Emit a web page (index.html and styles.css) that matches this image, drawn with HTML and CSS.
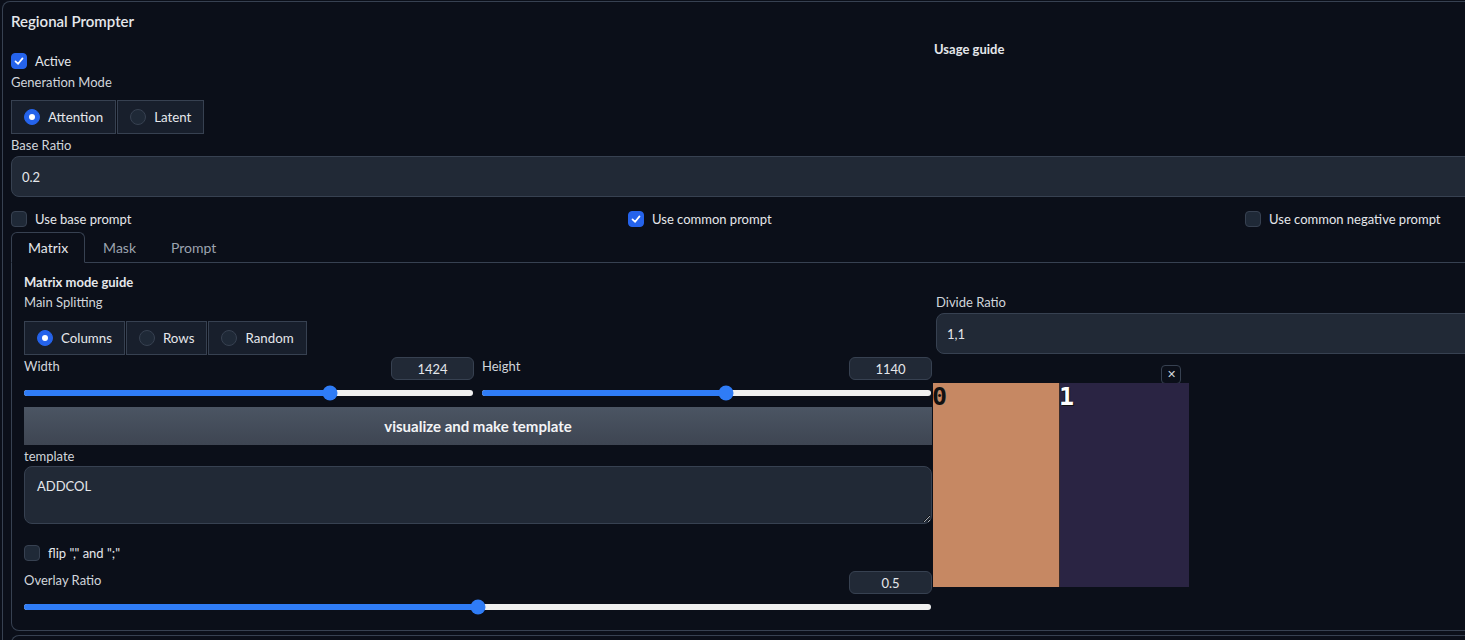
FILE: index.html
```html
<!DOCTYPE html>
<html lang="en">

<head>
  <meta charset="UTF-8">
  <meta name="viewport" content="width=device-width, initial-scale=1.0">
  <title>Regional Prompter</title>
  <link rel="stylesheet" href="styles.css">
</head>

<body>
  <div class="panel">
    <div class="panel-title">Regional Prompter</div>

    <div class="top-row">
      <div class="top-left">
        <label class="check"><span class="box on"><svg viewBox="0 0 16 16"><polyline points="4 8.5 7 11.2 12 5"/></svg></span>Active</label>
      </div>
      <div class="guide">Usage guide</div>
    </div>

    <div class="field-label">Generation Mode</div>
    <div class="radio-group">
      <label class="radio-item"><span class="dot on"></span>Attention</label>
      <label class="radio-item"><span class="dot"></span>Latent</label>
    </div>

    <div class="field-label">Base Ratio</div>
    <input class="text-box" type="text" value="0.2">

    <div class="check-row">
      <label class="check"><span class="box"></span>Use base prompt</label>
      <label class="check"><span class="box on"><svg viewBox="0 0 16 16"><polyline points="4 8.5 7 11.2 12 5"/></svg></span>Use common prompt</label>
      <label class="check"><span class="box"></span>Use common negative prompt</label>
    </div>

    <div class="tabs">
      <div class="tab-nav">
        <button class="tab active">Matrix</button>
        <button class="tab">Mask</button>
        <button class="tab">Prompt</button>
      </div>

      <div class="tab-body">
        <div class="guide">Matrix mode guide</div>

        <div class="matrix-row">
          <div class="matrix-left">
            <div class="field-label">Main Splitting</div>
            <div class="radio-group wide">
              <label class="radio-item"><span class="dot on"></span>Columns</label>
              <label class="radio-item"><span class="dot"></span>Rows</label>
              <label class="radio-item"><span class="dot"></span>Random</label>
            </div>

            <div class="slider-pair">
              <div class="slider">
                <div class="slider-head">
                  <span class="slider-label">Width</span>
                  <input class="num-box" type="text" value="1424">
                </div>
                <div class="track"><div class="fill" style="width: 68.2%"></div><span class="thumb" style="left: 68.2%"></span></div>
              </div>
              <div class="slider">
                <div class="slider-head">
                  <span class="slider-label">Height</span>
                  <input class="num-box" type="text" value="1140">
                </div>
                <div class="track"><div class="fill" style="width: 54.3%"></div><span class="thumb" style="left: 54.3%"></span></div>
              </div>
            </div>

            <button class="make-btn">visualize and make template</button>

            <div class="field-label">template</div>
            <textarea class="template-box" readonly>ADDCOL</textarea>

            <label class="check flip"><span class="box"></span>flip "," and ";"</label>

            <div class="slider overlay">
              <div class="slider-head">
                <span class="slider-label">Overlay Ratio</span>
                <input class="num-box" type="text" value="0.5">
              </div>
              <div class="track"><div class="fill" style="width: 50%"></div><span class="thumb" style="left: 50%"></span></div>
            </div>
          </div>

          <div class="matrix-right">
            <div class="field-label">Divide Ratio</div>
            <input class="text-box" type="text" value="1,1">

            <div class="preview">
              <button class="close-btn">&#x2715;</button>
              <div class="preview-img">
                <div class="region region-0"><span class="region-num dark">0</span></div>
                <div class="region region-1"><span class="region-num light">1</span></div>
              </div>
            </div>
          </div>
        </div>
      </div>
    </div>

    <div class="next-block"></div>
  </div>
</body>

</html>
```

FILE: styles.css
```css
body {
  margin: 0;
  background-color: #0b0f19;
  color: #e5e7eb;
  font-family: Lato, "Liberation Sans", sans-serif;
  font-size: 13px;
  overflow: hidden;
}

.panel {
  width: 1851px;
  margin: 1px 0 0 2px;
  padding: 0 8px;
  border: 1px solid #374151;
  border-bottom: none;
  border-radius: 8px 8px 0 0;
  min-height: 700px;
}

.panel-title {
  height: 38px;
  line-height: 38px;
  font-size: 15px;
  font-weight: 600;
}

.top-row {
  display: grid;
  grid-template-columns: 923px 1fr;
}

.top-left {
  padding-top: 11px;
}

.guide {
  line-height: 18px;
  font-weight: 700;
  font-size: 13px;
}

.tab-body .guide {
  line-height: 20px;
}

.field-label {
  line-height: 20px;
  margin-top: 1px;
  color: #d1d5db;
}

.matrix-row .field-label:first-child {
  margin-top: 0;
}

/* checkboxes */
.check {
  display: flex;
  align-items: center;
  gap: 8px;
  height: 20px;
}

.box {
  width: 16px;
  height: 16px;
  box-sizing: border-box;
  border: 1px solid #374151;
  border-radius: 4px;
  background-color: #1f2937;
  display: flex;
}

.box.on {
  background-color: #2563eb;
  border-color: #2563eb;
}

.box svg {
  width: 14px;
  height: 14px;
  fill: none;
  stroke: white;
  stroke-width: 2;
  stroke-linecap: round;
  stroke-linejoin: round;
}

/* radio groups */
.radio-group {
  display: flex;
  gap: 1px;
  margin-top: 8px;
}

.radio-group.wide {
  margin-top: 9px;
}

.radio-item {
  display: flex;
  align-items: center;
  gap: 8px;
  height: 34px;
  box-sizing: border-box;
  padding: 0 12px;
  border: 1px solid #374151;
  background-color: #181f2c;
  font-size: 13.3px;
}

.dot {
  width: 16px;
  height: 16px;
  box-sizing: border-box;
  border-radius: 50%;
  border: 1px solid #374151;
  background-color: #1f2937;
  display: flex;
  align-items: center;
  justify-content: center;
}

.dot.on {
  background-color: #2563eb;
  border-color: #2563eb;
}

.dot.on::after {
  content: "";
  width: 6px;
  height: 6px;
  border-radius: 50%;
  background: white;
}

.text-box {
  display: block;
  width: 100%;
  height: 41px;
  margin-top: 1px;
  box-sizing: border-box;
  padding: 0 10px;
  border: 1px solid #374151;
  border-radius: 8px;
  background-color: #212936;
  color: #e5e7eb;
  font-family: inherit;
  font-size: 13px;
}

.check-row {
  display: grid;
  grid-template-columns: repeat(3, 617px);
  margin-top: 12px;
}

/* tabs */
.tabs {
  margin-top: 3px;
}

.tab-nav {
  display: flex;
  height: 30px;
  border-bottom: 1px solid #374151;
}

.tab {
  height: 31px;
  padding: 0 16px;
  margin-right: 1px;
  border: 1px solid transparent;
  border-radius: 6px 6px 0 0;
  background: none;
  color: #9ca3af;
  font-family: inherit;
  font-size: 14px;
}

.tab.active {
  border-color: #374151;
  border-bottom-color: #0b0f19;
  background-color: #0b0f19;
  color: #e5e7eb;
}

.tab-body {
  padding: 9px 12px 20px;
  border: 1px solid #374151;
  border-top: none;
  border-radius: 0 0 8px 8px;
}

.matrix-row {
  display: grid;
  grid-template-columns: 908px 1fr;
  gap: 4px;
}

/* sliders */
.slider-pair {
  display: grid;
  grid-template-columns: 1fr 1fr;
  gap: 8px;
  margin-top: 2px;
}

.slider-head {
  display: flex;
  justify-content: space-between;
  align-items: flex-start;
  height: 23px;
}

.slider-label {
  line-height: 18px;
  color: #d1d5db;
}

.num-box {
  width: 83px;
  height: 23px;
  box-sizing: border-box;
  border: 1px solid #374151;
  border-radius: 6px;
  background-color: #212936;
  color: #e5e7eb;
  text-align: center;
  font-family: inherit;
  font-size: 13px;
}

.track {
  position: relative;
  height: 6px;
  margin: 10px 1px 0 0;
  border-radius: 3px;
  background-color: #f0f0f0;
}

.fill {
  height: 100%;
  border-radius: 3px 0 0 3px;
  background-color: #2f7cf6;
}

.thumb {
  position: absolute;
  top: 50%;
  width: 15px;
  height: 15px;
  border-radius: 50%;
  background-color: #2f7cf6;
  transform: translate(-50%, -50%);
}

.make-btn {
  display: block;
  width: 100%;
  height: 38px;
  margin-top: 11px;
  border: none;
  background: linear-gradient(#4b5563, #3e4552);
  color: #f3f4f6;
  font-family: inherit;
  font-size: 15px;
  font-weight: 700;
}

.template-box {
  display: block;
  width: 100%;
  height: 58px;
  box-sizing: border-box;
  padding: 11px 12px 9px;
  border: 1px solid #374151;
  border-radius: 8px;
  background-color: #212936;
  color: #e5e7eb;
  font-family: inherit;
  font-size: 13px;
  color-scheme: dark;
}

.flip {
  margin-top: 19px;
}

.overlay {
  margin-top: 8px;
}

/* region preview */
.preview {
  position: relative;
  width: 256px;
  margin: 3px 0 0 -3px;
  padding-top: 26px;
}

.close-btn {
  position: absolute;
  top: 8px;
  right: 8px;
  width: 20px;
  height: 19px;
  padding: 0;
  border: 1px solid #374151;
  border-radius: 4px;
  background: #0b0f19;
  color: #d1d5db;
  font-size: 11px;
  line-height: 17px;
}

.preview-img {
  display: flex;
  height: 204px;
}

.region {
  position: relative;
}

.region-0 {
  width: 126px;
  background-color: #c68863;
  border-right: 1px solid #3a2b2a;
}

.region-1 {
  flex: 1;
  background-color: #2a2443;
}

.region-num {
  position: absolute;
  top: 0;
  left: -1px;
  font-family: "DejaVu Sans Mono", monospace;
  font-weight: 700;
  font-size: 25px;
  line-height: 28px;
}

.region-num.dark {
  color: #111;
}

.region-num.light {
  color: #fff;
  text-shadow: 1px 1px 0 #111, -1px 0 0 #111;
}

.next-block {
  height: 20px;
  margin-top: 4px;
  border: 1px solid #374151;
  border-bottom: none;
  border-radius: 8px 8px 0 0;
}
```
